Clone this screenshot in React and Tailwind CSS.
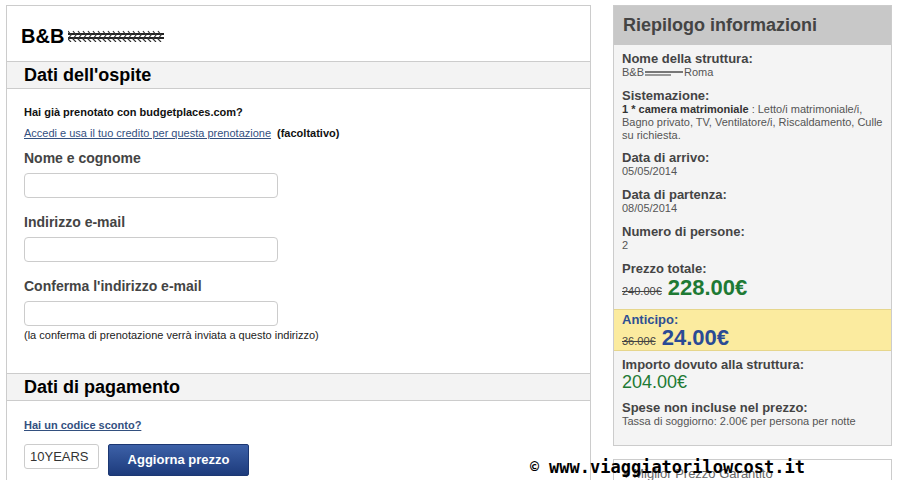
import React from "react";

function Scribble({ w = 96, h = 12 }) {
  // redacted name scribble
  return (
    <svg width={w} height={h} viewBox="0 0 96 12" className="block">
      <rect x="0" y="3" width="96" height="2" fill="#222" />
      <rect x="0" y="7" width="96" height="2" fill="#222" />
      {Array.from({ length: 19 }).map((_, i) => (
        <path
          key={i}
          d={`M${i * 5} 1 l3 4 l-3 4 l3 3`}
          stroke="#333"
          strokeWidth="1.2"
          fill="none"
        />
      ))}
    </svg>
  );
}

function Field({ label, mt }) {
  return (
    <div>
      <div className={`${mt} text-[14px] leading-[18px] font-bold text-[#444]`}>{label}</div>
      <input
        type="text"
        className="mt-[6px] block w-[254px] h-[25px] border border-[#ccc] rounded-[4px] bg-white"
      />
    </div>
  );
}

function Item({ label, children, mt = "mt-[9px]" }) {
  return (
    <div className={mt}>
      <div className="text-[13px] leading-[15px] font-bold text-[#444]">{label}</div>
      <div className="text-[11px] leading-[13px] text-[#555]">{children}</div>
    </div>
  );
}

export default function App() {
  return (
    <div className="relative w-[900px] h-[480px] overflow-hidden bg-white font-['Liberation_Sans',Arial,sans-serif] text-[#111]">
      <div className="flex items-start pl-[6px] pt-[5px] gap-[22px]">
        {/* left form */}
        <div className="w-[585px] h-[480px] border-l border-t border-r border-[#ccc]">
          <div className="h-[55px] pl-[14px] pt-[5px] flex items-center gap-[4px]">
            <span className="text-[20px] leading-[24px] font-bold text-black">B&amp;B</span>
            <Scribble />
          </div>
          <div className="h-[28px] border-y border-[#ccc] bg-[#f3f3f3] pl-[17px] flex items-center">
            <span className="text-[18px] font-bold text-black">Dati dell'ospite</span>
          </div>

          <div className="pl-[17px]">
            <div className="pt-[16px] text-[11px] leading-[14px] font-bold">
              Hai già prenotato con budgetplaces.com?
            </div>
            <div className="mt-[7px] text-[11px] leading-[14px]">
              <a href="#" className="underline text-[#33507f]">
                Accedi e usa il tuo credito per questa prenotazione
              </a>
              <span className="ml-[6px] font-bold">(facoltativo)</span>
            </div>

            <Field label="Nome e cognome" mt="mt-[9px]" />
            <Field label="Indirizzo e-mail" mt="mt-[15px]" />
            <Field label="Conferma l'indirizzo e-mail" mt="mt-[15px]" />
            <div className="mt-[2px] text-[11px] leading-[14px] text-[#222]">
              (la conferma di prenotazione verrà inviata a questo indirizzo)
            </div>
          </div>

          <div className="mt-[31px] h-[28px] border-y border-[#ccc] bg-[#f3f3f3] pl-[17px] flex items-center">
            <span className="text-[18px] font-bold text-black">Dati di pagamento</span>
          </div>

          <div className="pl-[17px]">
            <div className="pt-[17px] text-[11px] leading-[14px]">
              <a href="#" className="underline font-bold text-[#33507f]">
                Hai un codice sconto?
              </a>
            </div>
            <div className="mt-[12px] flex items-start gap-[9px]">
              <input
                type="text"
                defaultValue="10YEARS"
                className="w-[75px] h-[25px] border border-[#ccc] rounded-[3px] px-[5px] text-[13px] text-[#333]"
              />
              <button className="w-[141px] h-[32px] rounded-[2px] border border-[#1c3772] bg-gradient-to-b from-[#3d61a8] to-[#1d3b7c] text-white text-[13px] font-bold">
                Aggiorna prezzo
              </button>
            </div>
          </div>
        </div>

        {/* right summary */}
        <div className="w-[279px] flex flex-col">
          <div className="border border-[#ccc] bg-[#f4f4f4]">
            <div className="h-[39px] bg-[#c8c8c8] pl-[9px] flex items-center">
              <span className="text-[18px] font-bold text-[#444]">Riepilogo informazioni</span>
            </div>
            <div className="px-[8px] pt-[6px]">
              <Item label="Nome della struttura:" mt="mt-0">
                <span className="inline-flex items-center">
                  B&amp;B
                  <svg width="38" height="8" viewBox="0 0 38 8" className="mx-[1px]">
                    <rect x="0" y="2" width="38" height="2" fill="#777" />
                    <rect x="0" y="5" width="26" height="2" fill="#999" />
                  </svg>
                  Roma
                </span>
              </Item>
              <Item label="Sistemazione:">
                <b className="text-[#333]">1 * camera matrimoniale</b> : Letto/i matrimoniale/i, Bagno privato, TV,
                Ventilatore/i, Riscaldamento, Culle su richiesta.
              </Item>
              <Item label="Data di arrivo:" mt="mt-[8px]">05/05/2014</Item>
              <Item label="Data di partenza:">08/05/2014</Item>
              <Item label="Numero di persone:">2</Item>
              <div className="mt-[9px]">
                <div className="text-[13px] leading-[15px] font-bold text-[#444]">Prezzo totale:</div>
                <div className="h-[24px] flex items-baseline gap-[6px] leading-[24px] overflow-visible">
                  <span className="text-[11px] line-through text-[#444]">240.00€</span>
                  <span className="text-[22px] font-bold text-[#1e7a34]">228.00€</span>
                </div>
              </div>
            </div>
            <div className="mt-[9px] h-[42px] bg-[#fbeb9f] border-y border-[#e6d68c] px-[8px] pt-[2px]">
              <div className="text-[13px] leading-[15px] font-bold text-[#2d4f93]">Anticipo:</div>
              <div className="h-[22px] flex items-baseline gap-[6px] leading-[22px]">
                <span className="text-[11px] line-through text-[#444]">36.00€</span>
                <span className="text-[22px] font-bold text-[#2a4a95]">24.00€</span>
              </div>
            </div>
            <div className="px-[8px] pb-[17px]">
              <div className="mt-[6px]">
                <div className="text-[13px] leading-[15px] font-bold text-[#444]">
                  Importo dovuto alla struttura:
                </div>
                <div className="text-[18px] leading-[20px] text-[#1e7a34]">204.00€</div>
              </div>
              <Item label="Spese non incluse nel prezzo:" mt="mt-[8px]">
                Tassa di soggiorno: 2.00€ per persona per notte
              </Item>
            </div>
          </div>
          <div className="mt-[13px] h-[40px] border border-[#ccc] pl-[9px] pt-[4px] text-[13px] text-[#666]">
            ♦ Miglior Prezzo Garantito
          </div>
        </div>
      </div>

      {/* watermark */}
      <div className="absolute left-[530px] top-[456px] flex items-center gap-[10px] font-['DejaVu_Sans_Mono',monospace] font-bold text-black">
        <span className="text-[15px]">©</span>
        <span className="text-[17px] leading-[22px]">www.viaggiatorilowcost.it</span>
      </div>
    </div>
  );
}
